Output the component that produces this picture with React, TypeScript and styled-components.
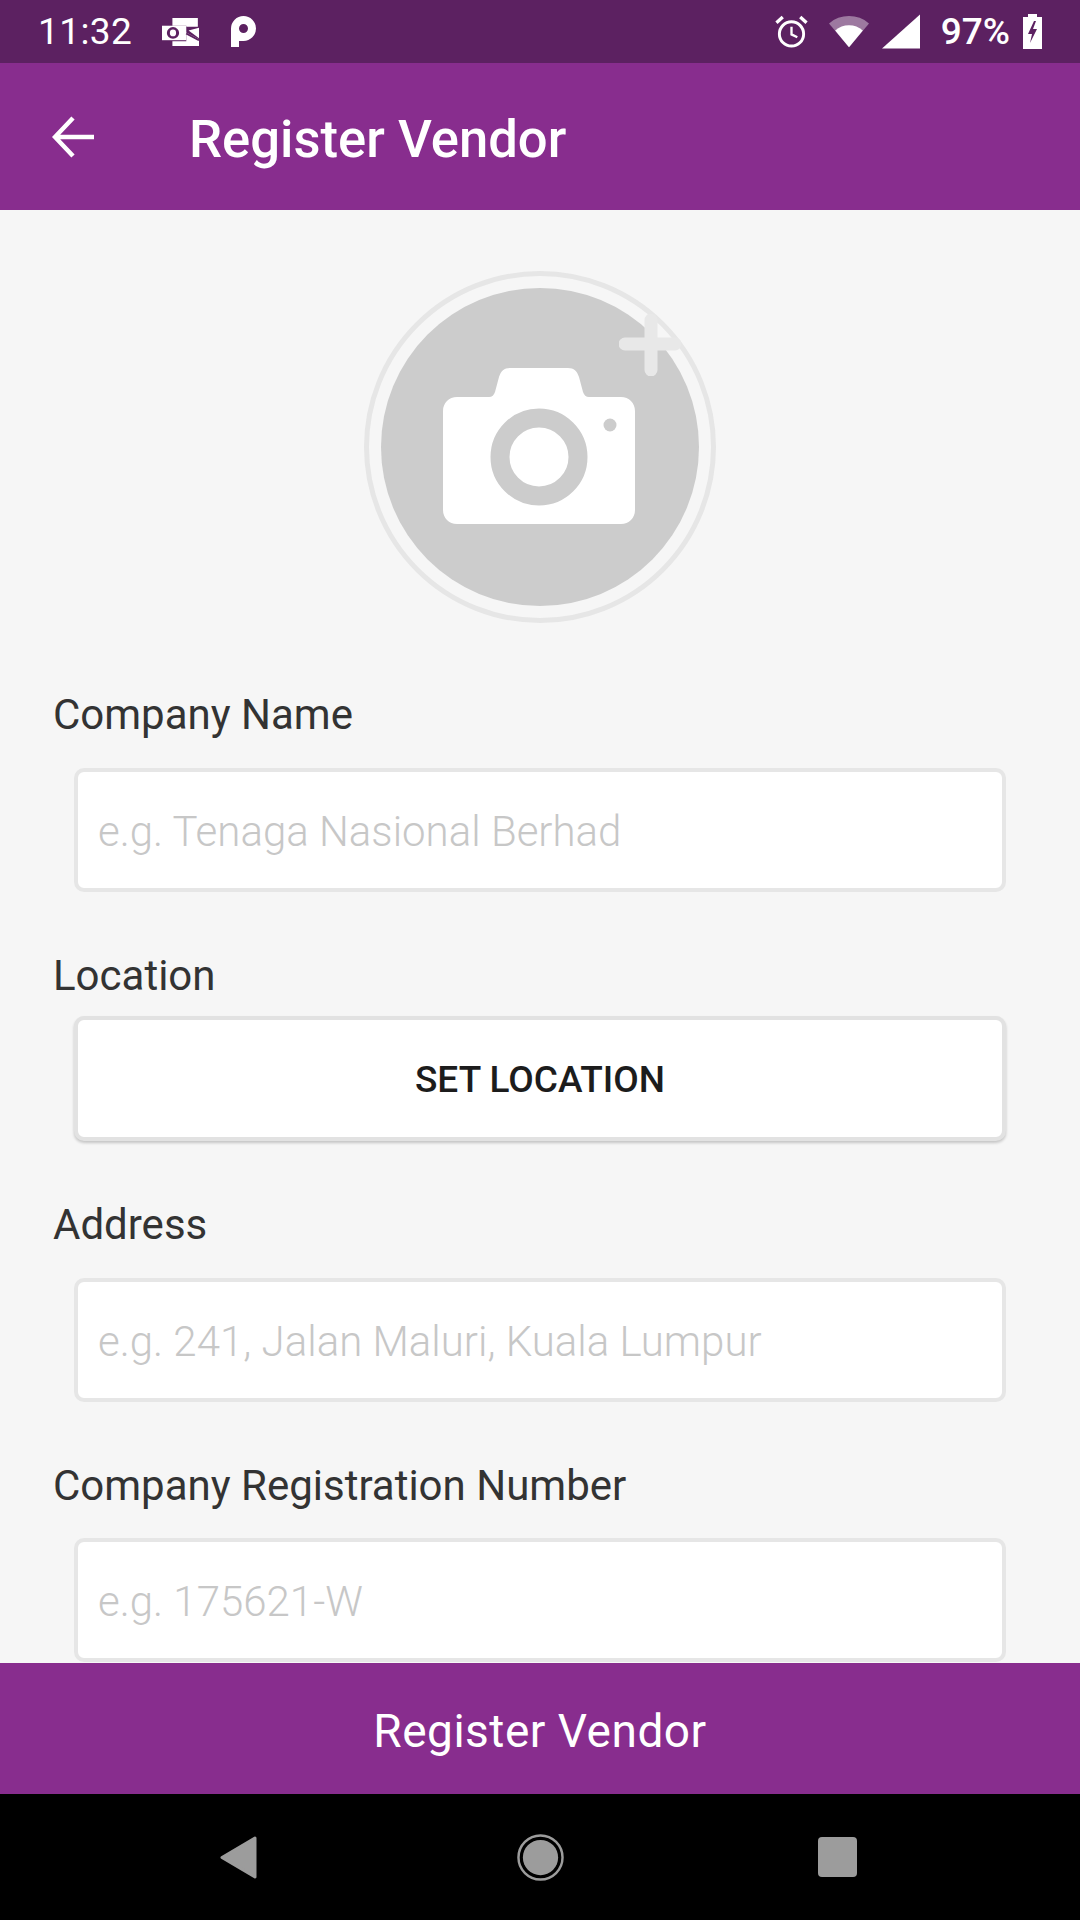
import React from "react";
import styled, { createGlobalStyle } from "styled-components";

const Global = createGlobalStyle`
  html, body { margin: 0; padding: 0; background: #f6f6f6; }
  * { box-sizing: border-box; }
`;

const Screen = styled.div`
  width: 1080px;
  height: 1920px;
  display: flex;
  flex-direction: column;
  overflow: hidden;
  background: #f6f6f6;
  font-family: Roboto, "Liberation Sans", sans-serif;
`;

const StatusBar = styled.div`
  height: 63px;
  flex: none;
  background: #5c2161;
  color: #fff;
  display: flex;
  align-items: center;
  justify-content: space-between;
  padding: 0 38px 0 38px;
`;

const StatusGroup = styled.div`
  display: flex;
  align-items: center;
`;

const Clock = styled.span`
  font-size: 37px;
  letter-spacing: 0.4px;
  line-height: 63px;
  margin-right: 30px;
`;

const Percent = styled.span`
  font-size: 37px;
  font-weight: 500;
  line-height: 63px;
  margin: 0 13px 0 21px;
`;

const OutlookSvg = styled.svg`
  margin-right: 32px;
`;

const WifiSvg = styled.svg`
  margin-left: 21px;
`;

const SignalSvg = styled.svg`
  margin-left: 13px;
`;

const AppBar = styled.header`
  height: 147px;
  flex: none;
  background: #882d8e;
  color: #fff;
  display: flex;
  align-items: center;
  padding-left: 52px;
`;

const Title = styled.h1`
  margin: 4px 0 0 95px;
  font-size: 52.6px;
  font-weight: 500;
  line-height: 60px;
`;

const Content = styled.main`
  flex: 1;
  min-height: 0;
  overflow: hidden;
`;

const AvatarWrap = styled.div`
  display: flex;
  justify-content: center;
  padding-top: 61px;
  margin-bottom: 66px;
`;

const AvatarRing = styled.div`
  position: relative;
  width: 352px;
  height: 352px;
  border-radius: 50%;
  border: 5px solid #e6e6e6;
  display: flex;
  align-items: center;
  justify-content: center;
`;

const AvatarDisc = styled.div`
  width: 318px;
  height: 318px;
  border-radius: 50%;
  background: #cccccc;
  display: flex;
  align-items: center;
  justify-content: center;
`;

const CameraSvg = styled.svg`
  margin: -2px 2px 0 0;
`;

const PlusBadge = styled.svg`
  position: absolute;
  left: 250px;
  top: 38px;
`;

const Field = styled.section`
  margin-bottom: 58px;
`;

const Label = styled.label<{ $gap: number }>`
  display: block;
  margin: 0 0 ${(p) => p.$gap}px 53px;
  font-size: 42px;
  line-height: 52px;
  color: #333333;
`;

const InputBox = styled.div`
  width: 932px;
  height: 124px;
  margin-left: 74px;
  padding: 2px 0 0 20px;
  background: #fff;
  border: 4px solid #e6e6e6;
  border-radius: 10px;
  display: flex;
  align-items: center;
  font-size: 42px;
  font-weight: 300;
  color: #c7c7c7;
`;

const LocationButton = styled.button`
  display: flex;
  align-items: center;
  justify-content: center;
  width: 932px;
  height: 125px;
  margin: 0 0 0 74px;
  padding: 2px 0 0;
  background: #fff;
  border: 4px solid #e2e2e2;
  border-radius: 10px;
  box-shadow: 0 2px 3px rgba(0, 0, 0, 0.2);
  font-family: inherit;
  font-size: 37px;
  font-weight: 500;
  color: #1c1c1c;
`;

const SubmitBar = styled.button`
  height: 131px;
  flex: none;
  border: 0;
  padding: 4px 0 0;
  background: #882d8e;
  color: #fff;
  font-family: inherit;
  font-size: 46px;
  font-weight: 400;
  letter-spacing: 0.5px;
`;

const NavBar = styled.nav`
  height: 126px;
  flex: none;
  background: #000;
  display: flex;
  align-items: center;
  justify-content: space-between;
  padding: 0 223px 0 220px;
`;

const NavHomeSvg = styled.svg`
  margin-left: 6px;
`;

const fields = [
  { label: "Company Name", hint: "e.g. Tenaga Nasional Berhad" },
  { label: "Address", hint: "e.g. 241, Jalan Maluri, Kuala Lumpur" },
  { label: "Company Registration Number", hint: "e.g. 175621-W" },
];

const OutlookIcon = () => (
  <OutlookSvg width="37" height="28" viewBox="0 0 32 29" preserveAspectRatio="none">
    <path d="M9 0h22v9H21V8H9z" fill="#fff" />
    <path d="M0 8h21v15H0z" fill="#fff" />
    <ellipse cx="9.500" cy="15.500" rx="4" ry="4.800" fill="none" stroke="#5c2161" strokeWidth="2.600" />
    <path d="M23 13l9-3v11z" fill="#fff" />
    <path d="M21 15l11 7v7H9v-5h12z" fill="#fff" />
    <path d="M21 16l11 7" stroke="#5c2161" strokeWidth="1.800" />
  </OutlookSvg>
);

const ParkIcon = () => (
  <svg width="25" height="31" viewBox="0 0 25 31">
    <path
      fillRule="evenodd"
      d="M12.500 0a12.500 12.500 0 0 1 0 25H8v6H0V12.500A12.500 12.500 0 0 1 12.500 0zm0 8a4.500 4.500 0 1 0 0 9 4.500 4.500 0 0 0 0-9z"
      fill="#fff"
    />
  </svg>
);

const AlarmIcon = () => (
  <svg width="33" height="33" viewBox="0 0 34 34" fill="none" stroke="#fff">
    <circle cx="17" cy="19.500" r="12.500" strokeWidth="3" />
    <path d="M17 12v8l6 3" strokeWidth="2.400" />
    <path d="M1.500 8L8 2M32.500 8L26 2" strokeWidth="3.400" />
  </svg>
);

const WifiIcon = () => (
  <WifiSvg width="40" height="33" viewBox="0 0 42 33">
    <path d="M21 33L0 8a32 32 0 0 1 42 0z" fill="#fff" fillOpacity="0.4" />
    <path d="M21 33L6.500 15.500a22 22 0 0 1 29 0z" fill="#fff" />
  </WifiSvg>
);

const SignalIcon = () => (
  <SignalSvg width="38" height="35" viewBox="0 0 39 35">
    <path d="M39 0v35H0z" fill="#fff" />
  </SignalSvg>
);

const BatteryIcon = () => (
  <svg width="19" height="35" viewBox="0 0 19 35">
    <path d="M5 0h9v3h5v32H0V3h5z" fill="#fff" />
    <path d="M11 7L5 20h4l-2 9 7-14h-4l3-8z" fill="#5c2161" />
  </svg>
);

const BackArrow = () => (
  <svg width="42" height="42" viewBox="0 0 42 42" fill="none" stroke="#fff" strokeWidth="4.500">
    <path d="M42 21H4M21 2L3 21l18 19" />
  </svg>
);

const CameraIcon = () => (
  <CameraSvg width="192" height="156" viewBox="0 0 192 156">
    <path
      d="M14 29h32c3 0 5-2 6-5l4-15c2-6 5-9 11-9h58c6 0 9 3 11 9l4 15c1 3 3 5 6 5h32c8 0 14 6 14 14v99c0 8-6 14-14 14H14c-8 0-14-6-14-14V43c0-8 6-14 14-14z"
      fill="#fff"
    />
    <circle cx="96" cy="89" r="39" fill="none" stroke="#cccccc" strokeWidth="19" />
    <circle cx="167" cy="57" r="6.500" fill="#cccccc" />
  </CameraSvg>
);

const NavBack = () => (
  <svg width="37" height="43" viewBox="0 0 37 43">
    <path d="M35 2L2 21.500 35 41z" fill="#9c9c9c" stroke="#9c9c9c" strokeWidth="3" strokeLinejoin="round" />
  </svg>
);

const NavHome = () => (
  <NavHomeSvg width="47" height="47" viewBox="0 0 48 48">
    <circle cx="24" cy="24" r="22.500" fill="none" stroke="#9c9c9c" strokeWidth="2.500" />
    <circle cx="24" cy="24" r="18" fill="#9c9c9c" />
  </NavHomeSvg>
);

const NavRecent = () => (
  <svg width="39" height="40" viewBox="0 0 39 40">
    <rect width="39" height="40" rx="4" fill="#9c9c9c" />
  </svg>
);

export default function App() {
  return (
    <Screen>
      <Global />
      <StatusBar>
        <StatusGroup>
          <Clock>11:32</Clock>
          <OutlookIcon />
          <ParkIcon />
        </StatusGroup>
        <StatusGroup>
          <AlarmIcon />
          <WifiIcon />
          <SignalIcon />
          <Percent>97%</Percent>
          <BatteryIcon />
        </StatusGroup>
      </StatusBar>
      <AppBar>
        <BackArrow />
        <Title>Register Vendor</Title>
      </AppBar>
      <Content>
        <AvatarWrap>
          <AvatarRing>
            <AvatarDisc>
              <CameraIcon />
            </AvatarDisc>
            <PlusBadge width="62" height="62" viewBox="0 0 62 62">
              <path d="M6 30h50M32 6v50" stroke="#e8e8e8" strokeWidth="13" strokeLinecap="round" />
            </PlusBadge>
          </AvatarRing>
        </AvatarWrap>
        <Field>
          <Label $gap={27}>{fields[0].label}</Label>
          <InputBox>{fields[0].hint}</InputBox>
        </Field>
        <Field>
          <Label $gap={14}>Location</Label>
          <LocationButton>SET LOCATION</LocationButton>
        </Field>
        <Field>
          <Label $gap={27}>{fields[1].label}</Label>
          <InputBox>{fields[1].hint}</InputBox>
        </Field>
        <Field>
          <Label $gap={26}>{fields[2].label}</Label>
          <InputBox>{fields[2].hint}</InputBox>
        </Field>
      </Content>
      <SubmitBar>Register Vendor</SubmitBar>
      <NavBar>
        <NavBack />
        <NavHome />
        <NavRecent />
      </NavBar>
    </Screen>
  );
}
